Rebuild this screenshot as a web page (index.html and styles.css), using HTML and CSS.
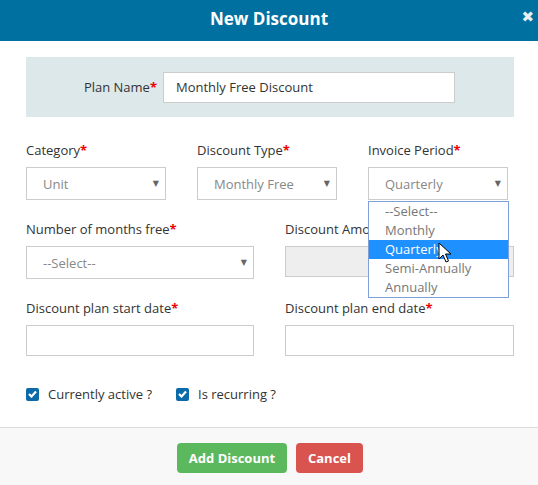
FILE: index.html
```html
<!DOCTYPE html>
<html>
<head>
<meta charset="utf-8">
<link rel="stylesheet" href="styles.css">
</head>
<body>
<div class="modal">
  <div class="header">
    <span class="title">New Discount</span>
    <span class="close">&#10006;</span>
  </div>
  <div class="content">
    <div class="plan-box">
      <label class="plan-label">Plan Name<span class="req">*</span></label>
      <div class="plan-input">Monthly Free Discount</div>
    </div>

    <div class="row three">
      <div class="field">
        <div class="label">Category<span class="req">*</span></div>
        <div class="select"><span>Unit</span><span class="arrow">&#9660;</span></div>
      </div>
      <div class="field">
        <div class="label">Discount Type<span class="req">*</span></div>
        <div class="select"><span>Monthly Free</span><span class="arrow">&#9660;</span></div>
      </div>
      <div class="field dd-host">
        <div class="label">Invoice Period<span class="req">*</span></div>
        <div class="select"><span>Quarterly</span><span class="arrow">&#9660;</span></div>
        <ul class="dropdown">
          <li>--Select--</li>
          <li>Monthly</li>
          <li class="hl">Quarterly</li>
          <li>Semi-Annually</li>
          <li>Annually</li>
        </ul>
        <svg class="cursor" width="14" height="22" viewBox="0 0 14 22">
          <path d="M1 1 L1 17 L5 13 L8 20 L10.5 19 L7.5 12 L13 12 Z" fill="#fff" stroke="#000" stroke-width="1" stroke-linejoin="miter"/>
        </svg>
      </div>
    </div>

    <div class="row two">
      <div class="field">
        <div class="label">Number of months free<span class="req">*</span></div>
        <div class="select wide"><span>--Select--</span><span class="arrow">&#9660;</span></div>
      </div>
      <div class="field">
        <div class="label">Discount Amount</div>
        <div class="input disabled"></div>
      </div>
    </div>

    <div class="row two">
      <div class="field">
        <div class="label">Discount plan start date<span class="req">*</span></div>
        <div class="input"></div>
      </div>
      <div class="field">
        <div class="label">Discount plan end date<span class="req">*</span></div>
        <div class="input"></div>
      </div>
    </div>

    <div class="checks">
      <label class="check"><span class="box"><svg width="9" height="8" viewBox="0 0 9 8"><path d="M1 4 L3.5 6.5 L8 1.5" fill="none" stroke="#fff" stroke-width="2.2"/></svg></span>Currently active ?</label>
      <label class="check"><span class="box"><svg width="9" height="8" viewBox="0 0 9 8"><path d="M1 4 L3.5 6.5 L8 1.5" fill="none" stroke="#fff" stroke-width="2.2"/></svg></span>Is recurring ?</label>
    </div>
  </div>
  <div class="footer">
    <button class="btn green">Add Discount</button>
    <button class="btn red">Cancel</button>
  </div>
</div>
</body>
</html>
```
FILE: styles.css
```css
* { box-sizing: border-box; }
html, body { margin: 0; padding: 0; background: #fff; }
body {
  font-family: "Open Sans", "Liberation Sans", sans-serif;
  font-size: 13px;
  color: #333;
  width: 538px;
  height: 485px;
  overflow: hidden;
}
.modal { width: 538px; height: 485px; display: flex; flex-direction: column; }
.header {
  position: relative;
  height: 41px;
  background: #0070a0;
  display: flex;
  align-items: center;
  justify-content: center;
}
.title { color: #fff; font-weight: 700; font-size: 17px; line-height: 20px; margin-top: -3px; }
.close {
  position: absolute;
  right: 4px;
  top: 9px;
  color: #e8eef2;
  font-size: 15px;
  line-height: 16px;
  font-family: "DejaVu Sans", sans-serif;
  font-weight: bold;
}
.content { padding: 16px 24px 0 26px; flex: 1; }
.plan-box {
  background: #dde8ea;
  height: 60px;
  display: flex;
  align-items: center;
}
.plan-label { width: 137px; text-align: right; padding-right: 6px; white-space: nowrap; }
.plan-input {
  width: 292px;
  height: 31px;
  border: 1px solid #ccc;
  background: #fff;
  padding: 0 12px;
  line-height: 28px;
  color: #333;
}
.req { color: #e00; font-weight: bold; }
.row { display: grid; column-gap: 31px; }
.row.three { grid-template-columns: 140px 140px 140px; margin-top: 24px; }
.row.two { grid-template-columns: 228px 229px; margin-top: 20px; }
.field { position: relative; }
.label { line-height: 18px; height: 18px; margin-bottom: 8px; white-space: nowrap; }
.select {
  height: 33px;
  border: 1px solid #ccc;
  display: flex;
  align-items: center;
  justify-content: space-between;
  padding: 0 6px 0 16px;
  color: #888;
}
.arrow { font-size: 8px; color: #666; font-family: "DejaVu Sans", sans-serif; }
.input { height: 31px; border: 1px solid #ccc; background: #fff; }
.input.disabled { background: #eee; }
.dropdown {
  position: absolute;
  left: 0;
  top: 60px;
  width: 141px;
  margin: 0;
  padding: 0;
  list-style: none;
  background: #fff;
  border: 1px solid #7ea0d6;
  z-index: 5;
}
.dropdown li {
  height: 19px;
  line-height: 19px;
  padding-left: 16px;
  color: #777;
}
.dropdown li.hl { background: #1e90ff; color: #fff; }
.cursor { position: absolute; left: 70px; top: 101px; z-index: 6; }
.checks { display: flex; margin-top: 31px; height: 14px; align-items: center; }
.check { display: flex; align-items: center; margin-right: 24px; color: #333; }
.box {
  width: 13px;
  height: 13px;
  background: #0b6aa8;
  border-radius: 2px;
  display: inline-flex;
  align-items: center;
  justify-content: center;
  margin-right: 9px;
}
.footer {
  height: 58px;
  border-top: 1px solid #dcdcdc;
  background: #f8f8f8;
  display: flex;
  justify-content: center;
  align-items: flex-start;
  padding-top: 15px;
  gap: 9px;
  padding-left: 2px;
}
.btn {
  height: 30px;
  border: none;
  border-radius: 4px;
  color: #fff;
  font-family: "Open Sans", "Liberation Sans", sans-serif;
  font-weight: 700;
  font-size: 13px;
  padding: 0;
}
.btn.green { background: #5cb85c; width: 110px; }
.btn.red { background: #d9534f; width: 67px; }
```
